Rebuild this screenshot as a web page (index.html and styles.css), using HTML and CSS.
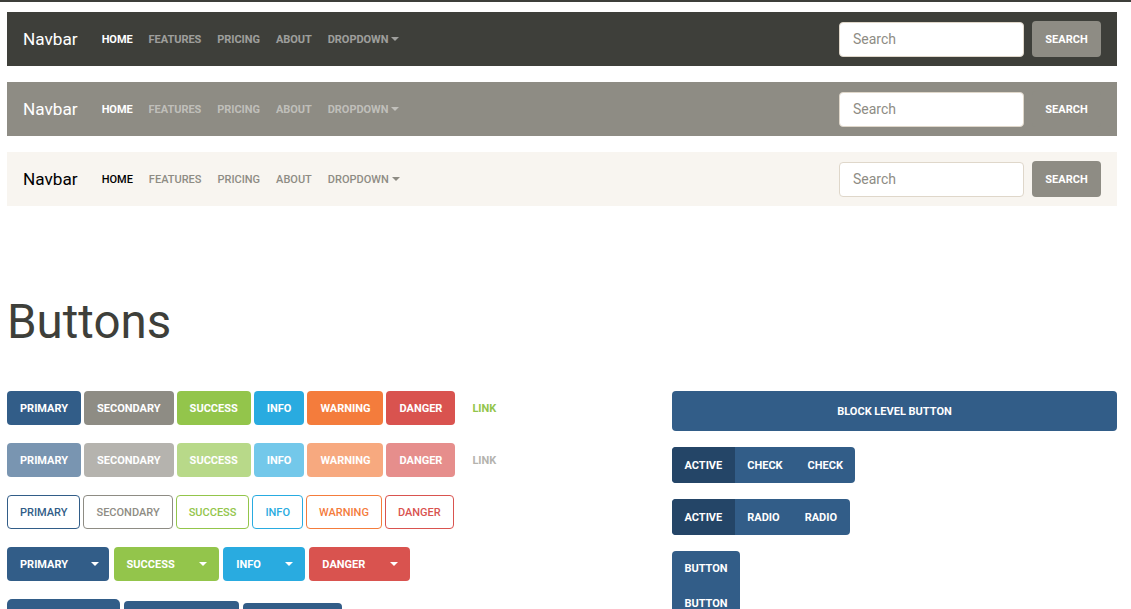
FILE: index.html
```html
<!DOCTYPE html>
<html>
<head>
<meta charset="utf-8">
<link rel="stylesheet" href="styles.css">
</head>
<body>
<div class="topline"></div>
<div class="page">
  <nav class="navbar navbar-dark">
    <span class="brand">Navbar</span>
    <ul class="nav">
      <li class="active">Home</li><li>Features</li><li>Pricing</li><li>About</li><li class="dropdown">Dropdown<span class="caret"></span></li>
    </ul>
    <form class="search">
      <input class="search-input" type="text" placeholder="Search">
      <button class="search-btn" type="button">Search</button>
    </form>
  </nav>
  <nav class="navbar navbar-secondary">
    <span class="brand">Navbar</span>
    <ul class="nav">
      <li class="active">Home</li><li>Features</li><li>Pricing</li><li>About</li><li class="dropdown">Dropdown<span class="caret"></span></li>
    </ul>
    <form class="search">
      <input class="search-input" type="text" placeholder="Search">
      <button class="search-btn" type="button">Search</button>
    </form>
  </nav>
  <nav class="navbar navbar-light">
    <span class="brand">Navbar</span>
    <ul class="nav">
      <li class="active">Home</li><li>Features</li><li>Pricing</li><li>About</li><li class="dropdown">Dropdown<span class="caret"></span></li>
    </ul>
    <form class="search">
      <input class="search-input" type="text" placeholder="Search">
      <button class="search-btn" type="button">Search</button>
    </form>
  </nav>

  <h1 class="heading">Buttons</h1>

  <div class="grid">
    <div class="col-left">
      <div class="btn-row">
        <button class="btn primary">Primary</button>
        <button class="btn secondary">Secondary</button>
        <button class="btn success">Success</button>
        <button class="btn info">Info</button>
        <button class="btn warning">Warning</button>
        <button class="btn danger">Danger</button>
        <button class="btn link">Link</button>
      </div>
      <div class="btn-row disabled">
        <button class="btn primary">Primary</button>
        <button class="btn secondary">Secondary</button>
        <button class="btn success">Success</button>
        <button class="btn info">Info</button>
        <button class="btn warning">Warning</button>
        <button class="btn danger">Danger</button>
        <button class="btn link link-disabled">Link</button>
      </div>
      <div class="btn-row">
        <button class="btn outline o-primary">Primary</button>
        <button class="btn outline o-secondary">Secondary</button>
        <button class="btn outline o-success">Success</button>
        <button class="btn outline o-info">Info</button>
        <button class="btn outline o-warning">Warning</button>
        <button class="btn outline o-danger">Danger</button>
      </div>
      <div class="btn-row split-row">
        <div class="split primary"><span class="split-main">Primary</span><span class="split-toggle"><span class="caret"></span></span></div>
        <div class="split success"><span class="split-main">Success</span><span class="split-toggle"><span class="caret"></span></span></div>
        <div class="split info"><span class="split-main">Info</span><span class="split-toggle"><span class="caret"></span></span></div>
        <div class="split danger"><span class="split-main">Danger</span><span class="split-toggle"><span class="caret"></span></span></div>
      </div>
      <div class="btn-row size-row">
        <button class="btn primary lg">Large button</button>
        <button class="btn primary md">Default button</button>
        <button class="btn primary sm">Small button</button>
      </div>
    </div>
    <div class="col-right">
      <button class="btn primary block">Block level button</button>
      <div class="group">
        <span class="g-btn g-active">Active</span><span class="g-btn">Check</span><span class="g-btn">Check</span>
      </div>
      <div class="group">
        <span class="g-btn g-active">Active</span><span class="g-btn">Radio</span><span class="g-btn">Radio</span>
      </div>
      <div class="group vertical">
        <span class="g-btn">Button</span><span class="g-btn">Button</span><span class="g-btn">Button</span>
      </div>
    </div>
  </div>
</div>
</body>
</html>
```

FILE: styles.css
```css
* { box-sizing: border-box; }
html, body { margin: 0; padding: 0; }
body {
  font-family: Roboto, "Liberation Sans", sans-serif;
  color: #3e3f3a;
  background: #fff;
  overflow: hidden;
}
.topline {
  height: 2px;
  background: #3e3f3a;
  width: 100%;
}
.page {
  padding: 10px 14px 0 7px;
}
.navbar {
  display: flex;
  align-items: center;
  height: 54px;
  padding: 0 16px;
  margin-bottom: 16px;
}
.navbar-dark { background: #3e3f3a; }
.navbar-secondary { background: #8e8c84; }
.navbar-light { background: #f8f5f0; }
.brand {
  font-size: 17.2px;
  margin-right: 16px;
  color: #fff;
}
.navbar-light .brand { color: #000; }
.nav {
  list-style: none;
  margin: 0;
  padding: 0;
  display: flex;
  flex: 1;
}
.nav li {
  font-size: 11px;
  font-weight: 700;
  text-transform: uppercase;
  padding: 0 8px;
  letter-spacing: -0.05px;
  color: rgba(255,255,255,0.5);
  display: flex;
  align-items: center;
}
.nav li.active { color: #fff; }
.navbar-secondary .nav li { color: rgba(255,255,255,0.45); }
.navbar-secondary .nav li.active { color: #fff; }
.navbar-light .nav li { color: #8e8c84; font-weight: 500; letter-spacing: 0; }
.navbar-light .nav li.active { color: #000; }
.caret {
  display: inline-block;
  width: 0;
  height: 0;
  margin-left: 3px;
  border-top: 4px solid currentColor;
  border-left: 4px solid transparent;
  border-right: 4px solid transparent;
  vertical-align: middle;
}
.search {
  display: flex;
  align-items: center;
  margin: 0;
}
.search-input {
  width: 185px;
  height: 35px;
  border: 1px solid #dfd7ca;
  border-radius: 4px;
  padding: 0 13px;
  font-family: Roboto, "Liberation Sans", sans-serif;
  font-size: 14px;
  color: #3e3f3a;
  background: #fff;
  margin-right: 8px;
  outline: none;
}
.search-input::placeholder { color: #8e8c84; }
.search-btn {
  height: 36px;
  width: 69px;
  border: none;
  border-radius: 4px;
  background: #8e8c84;
  color: #fff;
  font-family: Roboto, "Liberation Sans", sans-serif;
  font-size: 11px;
  font-weight: 700;
  text-transform: uppercase;
  padding: 0;
}

.heading {
  font-size: 47.5px;
  font-weight: 400;
  line-height: 1.2;
  margin: 88px 0 0 0;
  color: #3e3f3a;
}

.grid {
  display: grid;
  grid-template-columns: 665px 1fr;
  margin-top: 40px;
}
.btn-row {
  display: flex;
  align-items: center;
  gap: 3px;
  margin-bottom: 18px;
  height: 34px;
}
.btn {
  font-family: Roboto, "Liberation Sans", sans-serif;
  font-size: 11px;
  font-weight: 700;
  text-transform: uppercase;
  height: 34px;
  padding: 0 12px;
  border: 1px solid transparent;
  border-radius: 4px;
  color: #fff;
  white-space: nowrap;
  line-height: 1;
}
.primary { background: #325d88; }
.secondary { background: #8e8c84; }
.success { background: #93c54b; }
.info { background: #29abe0; }
.warning { background: #f47c3c; }
.danger { background: #d9534f; }
.btn.link { background: transparent; color: #93c54b; margin-left: 1px; }
.disabled .btn { opacity: 0.65; }
.btn.link-disabled { color: #8e8c84; }
.outline { background: #fff; }
.o-primary { border-color: #325d88; color: #325d88; font-weight: 500; }
.o-secondary { border-color: #8e8c84; color: #8e8c84; font-weight: 500; }
.o-success { border-color: #93c54b; color: #93c54b; font-weight: 500; }
.o-info { border-color: #29abe0; color: #29abe0; font-weight: 500; }
.o-warning { border-color: #f47c3c; color: #f47c3c; font-weight: 500; }
.o-danger { border-color: #d9534f; color: #d9534f; font-weight: 500; }

.split-row { gap: 4.5px; }
.split {
  display: flex;
  align-items: center;
  height: 34px;
  border-radius: 4px;
  color: #fff;
  font-size: 11px;
  font-weight: 700;
  text-transform: uppercase;
}
.split-main { padding: 0 12px 0 13px; }
.split-toggle {
  display: flex;
  justify-content: center;
  align-items: center;
}
.split-toggle .caret { margin-left: 0; }
.split.primary .split-toggle { width: 29px; }
.split.success .split-toggle { width: 32px; }
.split.info .split-toggle { width: 32px; }
.split.danger .split-toggle { width: 33px; }

.size-row { gap: 4px; align-items: flex-start; height: auto; }
.btn.lg { height: 46px; width: 113px; margin-top: 0; font-size: 13px; border-radius: 5px; }
.btn.md { height: 42px; width: 115px; margin-top: 2px; }
.btn.sm { height: 38px; width: 99px; margin-top: 4px; }

.col-right {
  display: flex;
  flex-direction: column;
  align-items: flex-start;
}
.btn.block {
  width: 445px;
  height: 40px;
  margin-bottom: 16px;
}
.group {
  display: inline-flex;
  border-radius: 4px;
  overflow: hidden;
  background: #325d88;
  margin-bottom: 16px;
  height: 36px;
}
.g-btn {
  display: flex;
  align-items: center;
  padding: 0 12.5px;
  color: #fff;
  font-size: 11px;
  font-weight: 700;
  text-transform: uppercase;
}
.g-active { background: #244567; }
.group.vertical {
  flex-direction: column;
  height: auto;
}
.group.vertical .g-btn {
  height: 35px;
  width: 68px;
  justify-content: center;
  padding: 0;
}
```
